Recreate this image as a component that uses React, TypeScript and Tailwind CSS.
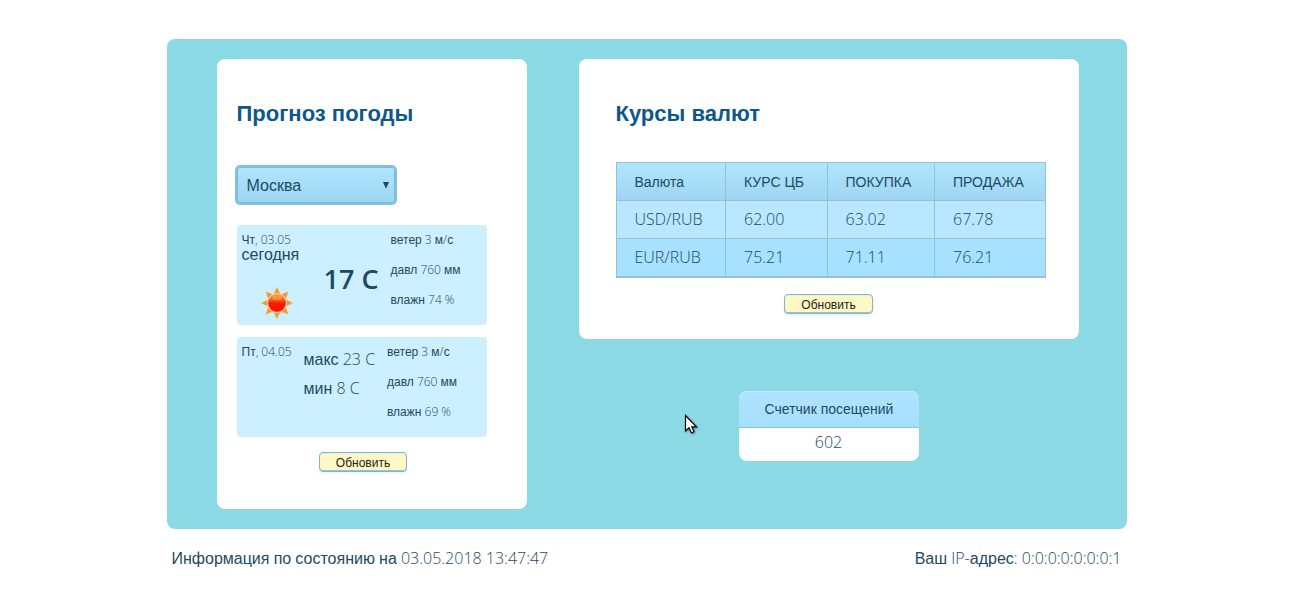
import type { ReactNode } from "react";

const SANS = "font-['Liberation_Sans',sans-serif]";

/** Latin text and digits use the light face; Cyrillic words use the regular sans. */
function Mixed({ children }: { children: string }) {
  return (
    <>
      {children.split(/([А-Яа-яЁё]+)/).map((part, i) =>
        i % 2 ? (
          <span key={i} className={SANS}>
            {part}
          </span>
        ) : (
          part
        ),
      )}
    </>
  );
}

function Title({ children }: { children: ReactNode }) {
  return (
    <h2 className="h-[26px] font-['Liberation_Sans',sans-serif] text-[22px] leading-[26px] font-bold whitespace-nowrap text-[#0d5889]">
      {children}
    </h2>
  );
}

function RefreshButton({ className }: { className: string }) {
  return (
    <button
      className={`flex h-5 items-center justify-center rounded border border-[#7fb3d0] bg-[#fff8c4] pl-px font-['Liberation_Sans',sans-serif] text-xs leading-[14px] text-[#222] shadow-[0_2px_3px_rgba(0,0,0,0.06),inset_0_-1px_0_#8fc4da,inset_0_1px_0_#e6f2e0] ${className}`}
    >
      Обновить
    </button>
  );
}

function Details({ wind, humidity }: { wind: string; humidity: string }) {
  return (
    <div className="flex flex-col text-xs leading-[30px] whitespace-nowrap">
      <span className="h-[30px]"><Mixed>{wind}</Mixed></span>
      <span className="h-[30px]"><Mixed>давл 760 мм</Mixed></span>
      <span className="h-[30px]"><Mixed>{humidity}</Mixed></span>
    </div>
  );
}

function Sun() {
  return (
    <svg viewBox="0 0 32 32" className="h-8 w-8">
      <defs>
        <linearGradient id="sunDisc" x1="0" y1="0" x2="0" y2="1">
          <stop offset="0" stopColor="#ff9a2a" />
          <stop offset="0.28" stopColor="#fb6420" />
          <stop offset="0.52" stopColor="#fa1c06" />
          <stop offset="1" stopColor="#ff0d00" />
        </linearGradient>
      </defs>
      {[0, 45, 90, 135, 180, 225, 270, 315].map((angle) => (
        <path
          key={angle}
          d="M16 .2 L19 6.6 Q16 5.4 13 6.6 Z"
          fill="#f79528"
          stroke="#ffb95c"
          strokeWidth=".5"
          transform={`rotate(${angle} 16 16)`}
        />
      ))}
      <circle cx="16" cy="16" r="9.4" fill="#ffb890" />
      <circle cx="16" cy="16" r="8.8" fill="url(#sunDisc)" />
      <ellipse cx="16" cy="11" rx="5" ry="2.4" fill="#ffd45a" opacity=".35" />
    </svg>
  );
}

const rates = [
  ["USD/RUB", "62.00", "63.02", "67.78"],
  ["EUR/RUB", "75.21", "71.11", "76.21"],
];

export default function App() {
  return (
    <div className="relative h-[616px] w-full overflow-hidden bg-white pt-[39px] pl-[166.5px] font-['Open_Sans','Liberation_Sans',sans-serif] font-light text-[#1d4a62]">
      <main className="flex h-[490px] w-[960px] items-start rounded-lg bg-[#8bd9e4] pt-5 pl-[50px]">
        <section className="flex h-[450px] w-[310px] flex-col rounded-lg bg-white pt-[42px] pl-5">
          <Title>Прогноз погоды</Title>
          <div className="mt-[38px] -ml-[2px] flex h-10 w-[162px] items-center justify-between rounded-[5px] border-2 border-[#7fc3e4] bg-linear-to-b from-[#b0e5ff] to-[#9dd5f1] pr-[6px] pl-[10px] font-['Liberation_Sans',sans-serif] text-base font-normal shadow-[inset_0_0_0_1px_#86b5cf]">
            <span className="pt-[2px]">Москва</span>
            <svg viewBox="0 0 6 6" className="mb-[1px] h-[6px] w-[6px] fill-[#1d4a62]">
              <path d="M0 0H6L3.4 6H2.6Z" />
            </svg>
          </div>

          <article className="mt-5 flex h-[100px] w-[250px] rounded bg-[#ccf0ff] pl-[5px]">
            <div className="flex w-[82px] flex-col whitespace-nowrap">
              <span className="mt-[7px] h-[14px] text-xs leading-[15px]"><Mixed>Чт, 03.05</Mixed></span>
              <span className="h-4 text-base leading-4"><Mixed>сегодня</Mixed></span>
              <div className="mt-[25px] ml-[19px]"><Sun /></div>
            </div>
            <span className="mt-9 w-[67px] text-[27px] leading-[36px] font-semibold whitespace-nowrap">17 C</span>
            <Details wind="ветер 3 м/с" humidity="влажн 74 %" />
          </article>

          <article className="mt-3 flex h-[100px] w-[250px] rounded bg-[#ccf0ff] pl-[5px]">
            <span className="mt-[7px] w-[62px] text-xs leading-[15px] whitespace-nowrap"><Mixed>Пт, 04.05</Mixed></span>
            <div className="mt-2 flex w-[83.5px] flex-col text-base leading-[29px] whitespace-nowrap">
              <span className="h-[29px]"><Mixed>макс 23 C</Mixed></span>
              <span className="h-[29px]"><Mixed>мин 8 C</Mixed></span>
            </div>
            <Details wind="ветер 3 м/с" humidity="влажн 69 %" />
          </article>

          <RefreshButton className="mt-[15px] ml-[82px] w-[88px] pt-[2px]" />
        </section>

        <div className="ml-[52px] w-[500px]">
          <section className="flex h-[280px] flex-col rounded-lg bg-white pt-[42px] pl-[37px]">
            <Title>Курсы валют</Title>
            <table className="mt-[35px] w-[429px] table-fixed border-collapse border border-b-2 border-[#98bfd5] text-left">
              <colgroup>
                <col className="w-[109px]" />
                <col className="w-[102px]" />
                <col className="w-[107px]" />
                <col className="w-[111px]" />
              </colgroup>
              <thead>
                <tr className="h-[38px] bg-linear-to-b from-[#b0e5ff] to-[#9dd5f1]">
                  {["Валюта", "КУРС ЦБ", "ПОКУПКА", "ПРОДАЖА"].map((name) => (
                    <th
                      key={name}
                      className="border border-[#98bfd5] py-0 pr-0 pl-[18px] font-['Liberation_Sans',sans-serif] text-sm font-normal even:pl-[18.5px]"
                    >
                      {name}
                    </th>
                  ))}
                </tr>
              </thead>
              <tbody>
                {rates.map((row, i) => (
                  <tr key={row[0]} className="h-[38px] odd:bg-[#b8e7ff] even:bg-[#a6e1ff]">
                    {row.map((cell) => (
                      <td
                        key={cell}
                        className={`border-x border-t border-[#98bfd5] pt-0 pr-0 pl-[18px] text-base leading-6 even:pl-[18.5px] ${i === 0 ? "pb-[2px]" : "pb-0"}`}
                      >
                        {cell}
                      </td>
                    ))}
                  </tr>
                ))}
              </tbody>
            </table>
            <RefreshButton className="mt-4 ml-[168px] w-[89px] pt-[2px]" />
          </section>

          <section className="mt-[52px] ml-40 h-[70px] w-[180px] overflow-hidden rounded-lg bg-white text-center">
            <h3 className="h-[37px] border-t border-b border-t-[#c0eaff] border-b-[#86c4e2] bg-linear-to-b from-[#b0e4ff] to-[#a6deff] pl-px font-['Liberation_Sans',sans-serif] text-sm leading-[35px] font-normal">
              Счетчик посещений
            </h3>
            <p className="text-base leading-[29px]">602</p>
          </section>
        </div>
      </main>

      <footer className="mt-[17px] flex w-[955px] justify-between pl-[5px] text-base leading-6 whitespace-nowrap">
        <span><Mixed>Информация по состоянию на 03.05.2018 13:47:47</Mixed></span>
        <span><Mixed>Ваш IP-адрес: 0:0:0:0:0:0:0:1</Mixed></span>
      </footer>

      <svg viewBox="0 0 14 21" className="absolute top-[414px] left-[684px] h-[21px] w-[14px] drop-shadow-[1px_1px_1px_rgba(0,0,0,0.35)]">
        <path d="M1.5 1.5V17L5 13.8L7.5 19L10 17.8L7.8 12.8H12.5Z" fill="#fff" stroke="#000" strokeWidth="1.2" />
      </svg>
    </div>
  );
}
